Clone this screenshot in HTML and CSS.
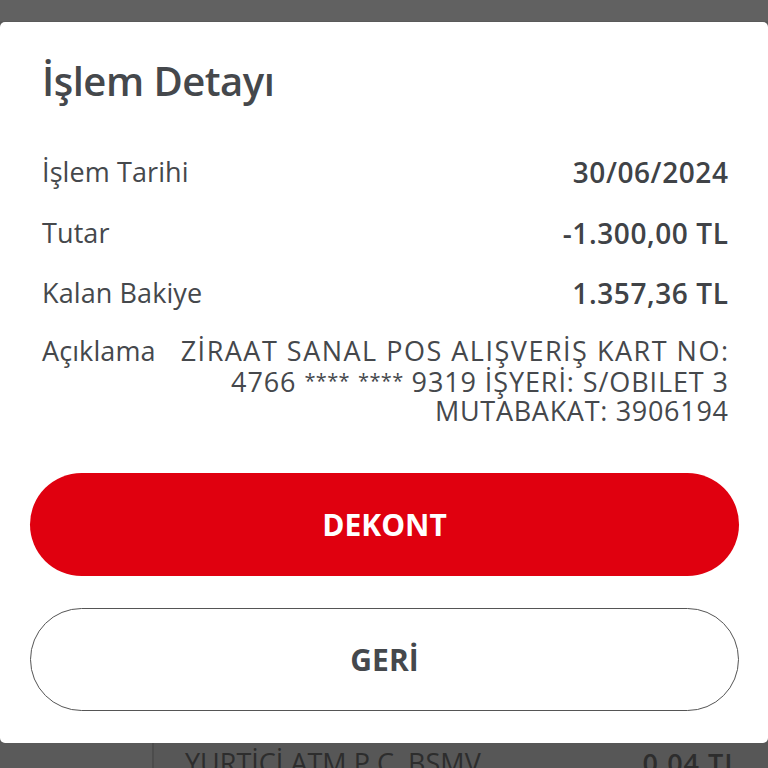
FILE: index.html
```html
<!DOCTYPE html>
<html lang="tr">
<head>
<meta charset="utf-8">
<title>İşlem Detayı</title>
<link rel="stylesheet" href="styles.css">
</head>
<body>
<div class="screen">
  <div class="top-band"></div>
  <div class="sheet">
    <h1 class="title">İşlem Detayı</h1>
    <div class="rows">
      <div class="row">
        <span class="label">İşlem Tarihi</span>
        <span class="value">30/06/2024</span>
      </div>
      <div class="row">
        <span class="label">Tutar</span>
        <span class="value">-1.300,00 TL</span>
      </div>
      <div class="row">
        <span class="label">Kalan Bakiye</span>
        <span class="value">1.357,36 TL</span>
      </div>
      <div class="row row-desc">
        <span class="label">Açıklama</span>
        <span class="desc"><span class="line line-wide">ZİRAAT SANAL POS ALIŞVERİŞ KART NO:</span><span class="line">4766 <span class="mask">****</span> <span class="mask">****</span> 9319 İŞYERİ: S/OBILET 3</span><span class="line line-last">MUTABAKAT: 3906194</span></span>
      </div>
    </div>
    <div class="actions">
      <button class="btn btn-primary">DEKONT</button>
      <button class="btn btn-secondary">GERİ</button>
    </div>
  </div>
  <div class="under-row">
    <div class="under-left"></div>
    <div class="under-main">
      <span class="under-text">YURTİÇİ ATM P.Ç. BSMV</span>
      <span class="under-amount">0,04 TL</span>
    </div>
  </div>
</div>
</body>
</html>
```
FILE: styles.css
```css
* { box-sizing: border-box; }
html, body {
  margin: 0;
  padding: 0;
  background: #585858;
  font-family: "Open Sans", "Liberation Sans", sans-serif;
  color: #45484c;
  overflow: hidden;
}
.screen {
  width: 768px;
  height: 768px;
  display: flex;
  flex-direction: column;
  overflow: hidden;
}
.top-band {
  height: 22px;
  flex: none;
  background: #616161;
  border-bottom: 1px solid #5a5a5a;
}
.sheet {
  flex: none;
  background: #ffffff;
  border-radius: 5px;
  padding: 35px 29px 32px 30px;
  display: flex;
  flex-direction: column;
}
.title {
  margin: 0 0 49px 12px;
  font-size: 40px;
  line-height: 48px;
  font-weight: 600;
  letter-spacing: -0.5px;
  color: #45484c;
}
.rows {
  display: flex;
  flex-direction: column;
  gap: 24.5px;
  padding: 0 11px 0 12px;
}
.row {
  display: flex;
  justify-content: space-between;
  align-items: flex-start;
  font-size: 27px;
  line-height: 36px;
}
.label {
  font-weight: 400;
  white-space: nowrap;
  letter-spacing: 0.1px;
}
.value {
  font-size: 28px;
  font-weight: 600;
  letter-spacing: 0.6px;
  margin-right: -0.6px;
  color: #404347;
}
.row-desc {
  line-height: 29.5px;
  margin-top: 0.8px;
}
.desc {
  display: flex;
  flex-direction: column;
  align-items: flex-end;
  font-weight: 400;
}
.line {
  display: block;
  white-space: nowrap;
  letter-spacing: 0.9px;
  margin-right: -0.9px;
}
.line-wide {
  letter-spacing: 1.5px;
  margin-right: -1.5px;
}
.line-last {
  letter-spacing: 0.7px;
  margin-right: -0.7px;
}
.mask {
  font-size: 20px;
  letter-spacing: 0.4px;
  vertical-align: 4px;
}
.actions {
  margin-top: 47.7px;
  display: flex;
  flex-direction: column;
  gap: 32px;
}
.btn {
  height: 103px;
  border-radius: 52px;
  font-family: "Open Sans", "Liberation Sans", sans-serif;
  font-size: 30px;
  font-weight: 700;
  width: 100%;
  cursor: pointer;
}
.btn-primary {
  background: #e0000f;
  color: #ffffff;
  border: none;
}
.btn-secondary {
  background: #ffffff;
  color: #45484c;
  border: 1.5px solid #555555;
}
.under-row {
  flex: 1;
  display: flex;
  background: #575757;
}
.under-left {
  width: 154px;
  background: #5a5a5a;
  border-right: 2px solid #4c4c4c;
}
.under-main {
  flex: 1;
  display: flex;
  justify-content: space-between;
  padding: 2px 28px 0 31px;
  font-size: 27px;
  line-height: 36px;
  color: #2d2d2d;
}
.under-amount {
  font-weight: 600;
  letter-spacing: 1px;
}
```
